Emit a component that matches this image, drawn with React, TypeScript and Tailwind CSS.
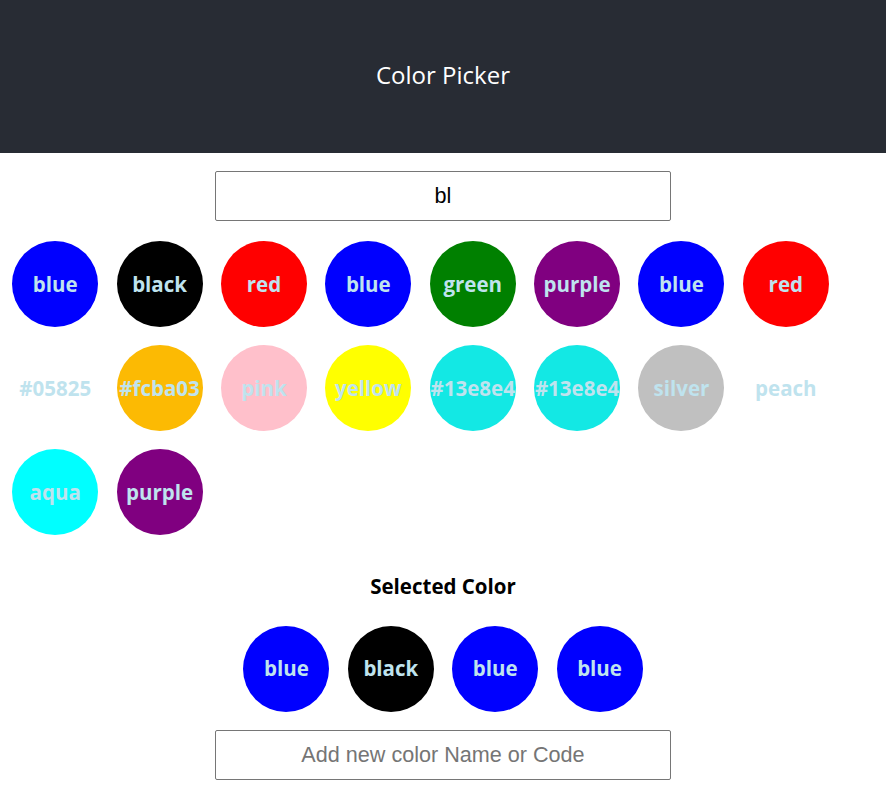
const colors = [
  { name: 'blue', bg: 'bg-[blue]' },
  { name: 'black', bg: 'bg-[black]' },
  { name: 'red', bg: 'bg-[red]' },
  { name: 'blue', bg: 'bg-[blue]' },
  { name: 'green', bg: 'bg-[green]' },
  { name: 'purple', bg: 'bg-[purple]' },
  { name: 'blue', bg: 'bg-[blue]' },
  { name: 'red', bg: 'bg-[red]' },
  { name: '#05825', bg: 'bg-transparent' },
  { name: '#fcba03', bg: 'bg-[#fcba03]' },
  { name: 'pink', bg: 'bg-[pink]' },
  { name: 'yellow', bg: 'bg-[yellow]' },
  { name: '#13e8e4', bg: 'bg-[#13e8e4]' },
  { name: '#13e8e4', bg: 'bg-[#13e8e4]' },
  { name: 'silver', bg: 'bg-[silver]' },
  { name: 'peach', bg: 'bg-transparent' },
  { name: 'aqua', bg: 'bg-[aqua]' },
  { name: 'purple', bg: 'bg-[purple]' },
];

const selected = [
  { name: 'blue', bg: 'bg-[blue]' },
  { name: 'black', bg: 'bg-[black]' },
  { name: 'blue', bg: 'bg-[blue]' },
  { name: 'blue', bg: 'bg-[blue]' },
];

function Swatch({ name, bg }: { name: string; bg: string }) {
  return (
    <div
      className={`mx-[9.2px] my-[9px] w-[86px] h-[86px] rounded-full flex items-center justify-center ${bg}`}
    >
      <span className="text-[20.5px] font-bold text-[#bfe3ee] whitespace-nowrap">{name}</span>
    </div>
  );
}

export default function App() {
  return (
    <div className="min-h-screen bg-white font-['Open_Sans',sans-serif]">
      <header className="h-[153px] bg-[#282c34] flex items-center justify-center">
        <h1 className="text-[24px] text-white -mt-[3px]">Color Picker</h1>
      </header>

      <div className="flex justify-center mt-[18px]">
        <input
          defaultValue="bl"
          className="w-[456px] h-[50px] border border-[#767676] rounded-[2px] text-center text-[21.6px] text-black font-['Liberation_Sans',sans-serif] outline-none"
        />
      </div>

      <div className="flex flex-wrap pl-[3px] mt-[11px]">
        {colors.map((c, i) => (
          <Swatch key={i} name={c.name} bg={c.bg} />
        ))}
      </div>

      <h3 className="text-center text-[20.5px] font-bold text-black mt-[27px]">Selected Color</h3>

      <div className="flex justify-center mt-[15px]">
        {selected.map((c, i) => (
          <Swatch key={i} name={c.name} bg={c.bg} />
        ))}
      </div>

      <div className="flex justify-center mt-[9px]">
        <input
          placeholder="Add new color Name or Code"
          className="w-[456px] h-[50px] border border-[#767676] rounded-[2px] text-center text-[21.6px] text-black placeholder:text-[#757575] font-['Liberation_Sans',sans-serif] outline-none"
        />
      </div>
    </div>
  );
}
